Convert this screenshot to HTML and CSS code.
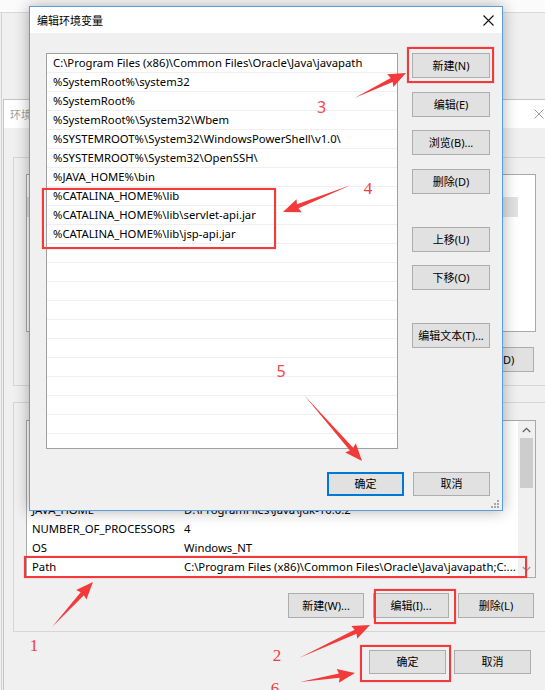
FILE: index.html
```html
<!DOCTYPE html>
<html lang="zh-CN">
<head>
<meta charset="utf-8">
<title>编辑环境变量</title>
<link rel="stylesheet" href="styles.css">
</head>
<body>
<div class="screen">
  <div class="top-strip"></div>
  <div class="left-edge"></div>

  <section class="bg-win">
    <header class="bg-title">
      <span class="bg-title-text">环境变量</span>
      <span class="bg-close">
        <svg width="10" height="10" viewBox="0 0 10 10"><path d="M0.5 0.5L9.5 9.5M9.5 0.5L0.5 9.5" stroke="#9a9a9a" stroke-width="1"/></svg>
      </span>
    </header>
    <div class="bg-body">
      <fieldset class="group group-user">
        <legend>admin 的用户变量</legend>
        <div class="bg-list user-list">
          <div class="urow"><span class="c1">OneDrive</span><span class="c2">C:\Users\admin\OneDrive</span></div>
          <div class="urow is-sel"><span class="c1">Path</span><span class="c2">C:\Users\admin\AppData\Local\Microsoft\WindowsApps;</span></div>
          <div class="urow"><span class="c1">TEMP</span><span class="c2">C:\Users\admin\AppData\Local\Temp</span></div>
          <div class="urow"><span class="c1">TMP</span><span class="c2">C:\Users\admin\AppData\Local\Temp</span></div>
        </div>
        <div class="btn-row">
          <button class="btn">新建(N)...</button>
          <button class="btn">编辑(E)...</button>
          <button class="btn">删除(D)</button>
        </div>
      </fieldset>

      <fieldset class="group group-sys">
        <legend>系统变量</legend>
        <div class="bg-list sys-list">
          <div class="sys-rows">
            <div class="srow"><span class="c1">CATALINA_HOME</span><span class="c2">D:\ProgramFiles\apache-tomcat-9.0.12</span></div>
            <div class="srow"><span class="c1">CLASSPATH</span><span class="c2">.;%JAVA_HOME%\lib;</span></div>
            <div class="srow"><span class="c1">ComSpec</span><span class="c2">C:\WINDOWS\system32\cmd.exe</span></div>
            <div class="srow"><span class="c1">DriverData</span><span class="c2">C:\Windows\System32\Drivers\DriverData</span></div>
            <div class="srow"><span class="c1">JAVA_HOME</span><span class="c2">D:\ProgramFiles\Java\jdk-10.0.2</span></div>
            <div class="srow"><span class="c1">NUMBER_OF_PROCESSORS</span><span class="c2">4</span></div>
            <div class="srow"><span class="c1">OS</span><span class="c2">Windows_NT</span></div>
            <div class="srow"><span class="c1">Path</span><span class="c2">C:\Program Files (x86)\Common Files\Oracle\Java\javapath;C:...</span></div>
          </div>
          <div class="vscroll">
            <span class="sb-arrow">
              <svg width="9" height="6" viewBox="0 0 9 6"><path d="M0.8 5L4.5 1.3L8.2 5" fill="none" stroke="#606060" stroke-width="1.3"/></svg>
            </span>
            <span class="sb-thumb"></span>
            <span class="sb-fill"></span>
            <span class="sb-arrow">
              <svg width="9" height="6" viewBox="0 0 9 6"><path d="M0.8 1L4.5 4.7L8.2 1" fill="none" stroke="#9a9a9a" stroke-width="1.3"/></svg>
            </span>
          </div>
        </div>
        <div class="btn-row">
          <button class="btn">新建(W)...</button>
          <button class="btn">编辑(I)...</button>
          <button class="btn">删除(L)</button>
        </div>
      </fieldset>

      <div class="ok-row">
        <button class="btn btn-ok">确定</button>
        <button class="btn btn-ok">取消</button>
      </div>
    </div>
  </section>

  <section class="dlg">
    <header class="dlg-title">
      <span class="dlg-title-text">编辑环境变量</span>
      <span class="dlg-close">
        <svg width="11" height="11" viewBox="0 0 11 11"><path d="M0.5 0.5L10.5 10.5M10.5 0.5L0.5 10.5" stroke="#111" stroke-width="1.1"/></svg>
      </span>
    </header>
    <div class="dlg-body">
      <div class="path-list">
        <div class="prow">C:\Program Files (x86)\Common Files\Oracle\Java\javapath</div>
        <div class="prow">%SystemRoot%\system32</div>
        <div class="prow">%SystemRoot%</div>
        <div class="prow">%SystemRoot%\System32\Wbem</div>
        <div class="prow">%SYSTEMROOT%\System32\WindowsPowerShell\v1.0\</div>
        <div class="prow">%SYSTEMROOT%\System32\OpenSSH\</div>
        <div class="prow">%JAVA_HOME%\bin</div>
        <div class="prow">%CATALINA_HOME%\lib</div>
        <div class="prow">%CATALINA_HOME%\lib\servlet-api.jar</div>
        <div class="prow">%CATALINA_HOME%\lib\jsp-api.jar</div>
        <div class="prow"></div>
        <div class="prow"></div>
        <div class="prow"></div>
        <div class="prow"></div>
        <div class="prow"></div>
        <div class="prow"></div>
        <div class="prow"></div>
        <div class="prow"></div>
        <div class="prow"></div>
        <div class="prow"></div>
        <div class="prow"></div>
      </div>
      <div class="side-btns">
        <button class="btn btn-side">新建(N)</button>
        <button class="btn btn-side">编辑(E)</button>
        <button class="btn btn-side">浏览(B)...</button>
        <button class="btn btn-side">删除(D)</button>
        <button class="btn btn-side gap-before">上移(U)</button>
        <button class="btn btn-side">下移(O)</button>
        <button class="btn btn-side gap-before">编辑文本(T)...</button>
      </div>
      <div class="dlg-actions">
        <button class="btn btn-side is-default">确定</button>
        <button class="btn btn-side">取消</button>
      </div>
    </div>
    <span class="grip">
      <svg width="8" height="8" viewBox="0 0 8 8" fill="#a8a8a8"><rect x="6" y="0" width="2" height="2"/><rect x="3" y="3" width="2" height="2"/><rect x="6" y="3" width="2" height="2"/><rect x="0" y="6" width="2" height="2"/><rect x="3" y="6" width="2" height="2"/><rect x="6" y="6" width="2" height="2"/></svg>
    </span>
  </section>

  <div class="mark mark-new"></div>
  <div class="mark mark-paths"></div>
  <div class="mark mark-path"></div>
  <div class="mark mark-edit"></div>
  <div class="mark mark-ok"></div>

  <svg class="annot" width="545" height="690" viewBox="0 0 545 690">
    <g fill="#f23a3a">
      <path transform="translate(52 627) rotate(-47.7)" d="M0 0L45 2.2L43.5 7L60.9 0L43.5 -7L45 -2.2Z"/>
      <path transform="translate(299 658) rotate(-24.9)" d="M0 0L62.4 2.2L60.9 7L78.3 0L60.9 -7L62.4 -2.2Z"/>
      <path transform="translate(300 682) rotate(-9.3)" d="M0 0L39.8 2.2L38.3 7L55.7 0L38.3 -7L39.8 -2.2Z"/>
      <path transform="translate(354.5 98) rotate(-25.9)" d="M0 0L41.3 2.2L39.8 7L57.2 0L39.8 -7L41.3 -2.2Z"/>
      <path transform="translate(351 185) rotate(158.3)" d="M0 0L57.3 2.2L55.8 7L73.2 0L55.8 -7L57.3 -2.2Z"/>
      <path transform="translate(304 395) rotate(48.7)" d="M0 0L72 2.2L70.5 7L87.9 0L70.5 -7L72 -2.2Z"/>
    </g>
    <g class="num-serif" fill="#f03c3c">
      <text x="34" y="651">1</text>
      <text x="277" y="661">2</text>
      <text x="368" y="194">4</text>
      <text x="275" y="694">6</text>
    </g>
    <g class="num-sans" fill="#f44848">
      <text x="321.5" y="113">3</text>
      <text x="281" y="377">5</text>
    </g>
  </svg>
</div>
</body>
</html>
```

FILE: styles.css
```css
* {
  box-sizing: border-box;
}

html,
body {
  margin: 0;
  padding: 0;
}

body {
  width: 545px;
  height: 690px;
  overflow: hidden;
  background: #f0f0f0;
  font-family: "Noto Sans", "Noto Sans CJK SC", sans-serif;
  font-size: 11px;
  color: #000;
}

.screen {
  position: relative;
  width: 545px;
  height: 690px;
  overflow: hidden;
  background: #f0f0f0;
}

.top-strip {
  height: 13px;
  background: #fbfbfb;
  border-bottom: 1px solid #d8d8d8;
}

.left-edge {
  position: absolute;
  left: 1px;
  top: 13px;
  bottom: 0;
  width: 1px;
  background: #d2d2d2;
}

/* ---------- background window ---------- */
.bg-win {
  position: absolute;
  left: 3px;
  top: 99px;
  width: 560px;
  height: 620px;
  background: #f0f0f0;
  border: 1px solid #c4c4c4;
  display: flex;
  flex-direction: column;
}

.bg-title {
  height: 28px;
  flex: none;
  background: #fff;
  display: flex;
  align-items: center;
  justify-content: space-between;
  padding-left: 6px;
  color: #a0a0a0;
  font-size: 11px;
}

.bg-close {
  width: 46px;
  display: flex;
  justify-content: center;
}

.bg-close svg {
  display: block;
}

.bg-body {
  display: flex;
  flex-direction: column;
  padding: 0 0 0 9px;
}

.group {
  margin: 0;
  width: 537px;
  border: 1px solid #d6d6d6;
  padding: 0 13px 13px 12px;
  display: flex;
  flex-direction: column;
}

.group legend {
  padding: 0 1px;
  margin-left: 7px;
  line-height: 16px;
  font-size: 11px;
}

.group-user {
  margin-top: 21px;
}

.group-sys {
  margin-top: 8px;
}

.bg-list {
  width: 510px;
  height: 158px;
  background: #fff;
  border: 1px solid #a9a9a9;
  overflow: hidden;
}

.user-list {
  margin-top: 9px;
  padding-top: 2px;
}

.urow {
  height: 20px;
  display: grid;
  grid-template-columns: 152px 1fr;
  align-items: center;
  padding-left: 5px;
  margin-right: 17px;
  white-space: nowrap;
  overflow: hidden;
}

.urow.is-sel {
  background: #e2e2e2;
}

.sys-list {
  margin-top: 10px;
  display: flex;
}

.sys-rows {
  flex: 1;
  padding-top: 3px;
  overflow: hidden;
}

.srow {
  height: 19px;
  display: grid;
  grid-template-columns: 152px 1fr;
  align-items: center;
  padding-left: 5px;
  white-space: nowrap;
  overflow: hidden;
  font-size: 11.3px;
}

.vscroll {
  width: 17px;
  flex: none;
  background: #f0f0f0;
  display: flex;
  flex-direction: column;
  align-items: center;
}

.sb-arrow {
  height: 17px;
  display: flex;
  align-items: center;
  justify-content: center;
}

.sb-thumb {
  width: 13px;
  height: 50px;
  background: #cdcdcd;
}

.sb-fill {
  flex: 1;
}

.btn-row {
  display: flex;
  justify-content: flex-end;
  gap: 9px;
  padding-right: 2px;
  margin-top: 15px;
}

.btn {
  font-family: "Noto Sans", "Noto Sans CJK SC", sans-serif;
  font-size: 11px;
  color: #000;
  background: #e1e1e1;
  border: 1px solid #adadad;
  height: 25px;
  width: 76px;
  padding: 0;
  margin: 0;
  line-height: 23px;
  text-align: center;
  white-space: nowrap;
}

.ok-row {
  display: flex;
  justify-content: flex-end;
  gap: 8px;
  margin-top: 18px;
  width: 537px;
  padding-right: 19px;
}

.btn-ok {
  width: 77px;
  height: 24px;
  line-height: 22px;
}

/* ---------- front dialog ---------- */
.dlg {
  position: absolute;
  left: 29px;
  top: 6px;
  width: 474px;
  height: 505px;
  background: #f0f0f0;
  border: 1px solid #5a9de0;
  box-shadow: 0 0 14px rgba(0, 0, 0, 0.32);
  display: flex;
  flex-direction: column;
}

.dlg-title {
  height: 26px;
  flex: none;
  background: #fff;
  display: flex;
  align-items: center;
  justify-content: space-between;
  padding: 0 8px 0 7px;
}

.dlg-title-text {
  font-size: 11px;
}

.dlg-close svg {
  display: block;
}

.dlg-body {
  flex: 1;
  display: grid;
  grid-template-columns: 352px 78px;
  grid-template-rows: 396px 24px;
  column-gap: 14px;
  row-gap: 23px;
  padding: 20px 12px 14px 16px;
}

.path-list {
  background: #fff;
  border: 1px solid #a0a0a0;
  overflow: hidden;
}

.prow {
  height: 19px;
  border-bottom: 1px solid #efefef;
  padding-left: 6px;
  line-height: 18px;
  font-size: 11.3px;
  white-space: nowrap;
  overflow: hidden;
}

.side-btns {
  display: flex;
  flex-direction: column;
  gap: 13.5px;
}

.btn-side {
  width: 78px;
  height: 25px;
  flex: none;
}

.side-btns .gap-before {
  margin-top: 19.5px;
}

.dlg-actions {
  grid-column: 1 / span 2;
  display: flex;
  justify-content: flex-end;
  gap: 9px;
}

.dlg-actions .btn-side {
  width: 77px;
  height: 24px;
  line-height: 22px;
}

.btn.is-default {
  border: 1px solid #0078d7;
  box-shadow: inset 0 0 0 1px #0078d7;
}

.grip {
  position: absolute;
  right: 3px;
  bottom: 2px;
  display: block;
  line-height: 0;
}

/* ---------- annotations ---------- */
.mark {
  position: absolute;
  border: 2px solid #f23a3a;
  box-shadow: 0 0 1px rgba(242, 58, 58, 0.6);
}

.mark-new {
  left: 407px;
  top: 47px;
  width: 87px;
  height: 36px;
}

.mark-paths {
  left: 42px;
  top: 188px;
  width: 234px;
  height: 61px;
}

.mark-path {
  left: 24px;
  top: 556px;
  width: 503px;
  height: 22px;
}

.mark-edit {
  left: 374px;
  top: 589px;
  width: 82px;
  height: 35px;
}

.mark-ok {
  left: 360px;
  top: 645px;
  width: 91px;
  height: 37px;
}

.annot {
  position: absolute;
  left: 0;
  top: 0;
  pointer-events: none;
}

.num-serif text {
  font-family: "Liberation Serif", serif;
  font-size: 17px;
  text-anchor: middle;
}

.num-sans text {
  font-family: "Noto Sans", sans-serif;
  font-size: 16px;
  text-anchor: middle;
}
```
